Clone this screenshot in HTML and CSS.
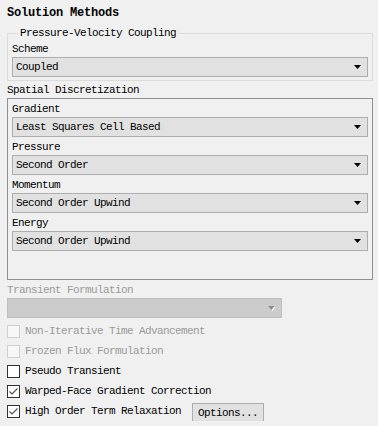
FILE: index.html
```html
<!DOCTYPE html>
<html lang="en">
<head>
    <meta charset="UTF-8">
    <meta name="viewport" content="width=device-width, initial-scale=1.0">
    <title>Solution Methods</title>
    <link rel="stylesheet" href="styles.css">
</head>
<body>
    <div class="panel">
        <div class="title">Solution Methods</div>

        <fieldset class="group">
            <legend>Pressure-Velocity Coupling</legend>
            <div class="label">Scheme</div>
            <div class="combo">
                <span>Coupled</span>
                <svg class="arrow" width="7" height="4" viewBox="0 0 7 4"><path d="M0 0H7L3.5 4Z" fill="#000"/></svg>
            </div>
        </fieldset>

        <div class="section-label">Spatial Discretization</div>
        <div class="box">
            <div class="label">Gradient</div>
            <div class="combo">
                <span>Least Squares Cell Based</span>
                <svg class="arrow" width="7" height="4" viewBox="0 0 7 4"><path d="M0 0H7L3.5 4Z" fill="#000"/></svg>
            </div>
            <div class="label">Pressure</div>
            <div class="combo">
                <span>Second Order</span>
                <svg class="arrow" width="7" height="4" viewBox="0 0 7 4"><path d="M0 0H7L3.5 4Z" fill="#000"/></svg>
            </div>
            <div class="label">Momentum</div>
            <div class="combo">
                <span>Second Order Upwind</span>
                <svg class="arrow" width="7" height="4" viewBox="0 0 7 4"><path d="M0 0H7L3.5 4Z" fill="#000"/></svg>
            </div>
            <div class="label">Energy</div>
            <div class="combo">
                <span>Second Order Upwind</span>
                <svg class="arrow" width="7" height="4" viewBox="0 0 7 4"><path d="M0 0H7L3.5 4Z" fill="#000"/></svg>
            </div>
        </div>

        <div class="label disabled">Transient Formulation</div>
        <div class="combo combo-disabled">
            <span></span>
            <svg class="arrow" width="8" height="5" viewBox="0 0 8 5"><path d="M0 0H7L3.5 4Z" fill="#8e8e8e"/><path d="M7 0.5L4 4.5" stroke="#fff" stroke-width="1.2"/></svg>
        </div>

        <div class="checks">
            <div class="check disabled">
                <span class="box-mark"></span>
                <span>Non-Iterative Time Advancement</span>
            </div>
            <div class="check disabled">
                <span class="box-mark"></span>
                <span>Frozen Flux Formulation</span>
            </div>
            <div class="check">
                <span class="box-mark"></span>
                <span>Pseudo Transient</span>
            </div>
            <div class="check">
                <span class="box-mark"><svg width="11" height="11" viewBox="0 0 11 11"><path d="M1.5 5.5L4 8L9.5 2.5" fill="none" stroke="#555" stroke-width="1.2"/></svg></span>
                <span>Warped-Face Gradient Correction</span>
            </div>
            <div class="check">
                <span class="box-mark"><svg width="11" height="11" viewBox="0 0 11 11"><path d="M1.5 5.5L4 8L9.5 2.5" fill="none" stroke="#555" stroke-width="1.2"/></svg></span>
                <span>High Order Term Relaxation</span>
                <button class="button">Options...</button>
            </div>
        </div>
    </div>
</body>
</html>
```

FILE: styles.css
```css
body {
    margin: 0;
    background-color: #f0f0f0;
    font-family: "Liberation Mono", "DejaVu Sans Mono", monospace;
    font-size: 11px;
    letter-spacing: -0.6px;
    color: #000;
}

.panel {
    width: 366px;
    padding: 0 5px 0 7px;
}

.title {
    padding-top: 6px;
    line-height: 14px;
    font-size: 12px;
    font-weight: bold;
    letter-spacing: -0.2px;
}

.group {
    margin: 6px 0 0 0;
    padding: 0 4px 3px 4px;
    border: 1px solid #dcdcdc;
}

.group legend {
    margin-left: 6px;
    padding: 0 2px;
    line-height: 14px;
}

.group .label {
    padding-top: 1px;
}

.label {
    padding-top: 2px;
    line-height: 16px;
}

.section-label {
    margin-top: 2px;
    line-height: 15px;
}

.box {
    padding: 0 4px 28px 4px;
    border: 1px solid #8c8f96;
}

.combo {
    height: 18px;
    display: flex;
    align-items: center;
    justify-content: space-between;
    padding: 0 6px 0 3px;
    background-color: #e1e1e1;
    border: 1px solid #adadad;
}

.combo-disabled {
    width: 265px;
    background-color: #cccccc;
    border-color: #bfbfbf;
    padding-right: 5px;
}

.disabled {
    color: #9a9a9a;
}

.checks {
    margin-top: 3px;
}

.check {
    height: 20px;
    display: flex;
    align-items: center;
}

.box-mark {
    width: 11px;
    height: 11px;
    margin-right: 5px;
    border: 1px solid #333;
    background-color: #fff;
    display: flex;
}

.check.disabled .box-mark {
    border-color: #cfcfcf;
    background-color: #f7f7f7;
}

.button {
    align-self: flex-end;
    margin: 0 0 -2px 11px;
    width: 72px;
    height: 20px;
    padding: 0 0 0 5px;
    text-align: left;
    font-family: inherit;
    font-size: 11px;
    letter-spacing: -0.6px;
    color: #000;
    background-color: #e1e1e1;
    border: 1px solid #adadad;
    border-radius: 0;
}
```
